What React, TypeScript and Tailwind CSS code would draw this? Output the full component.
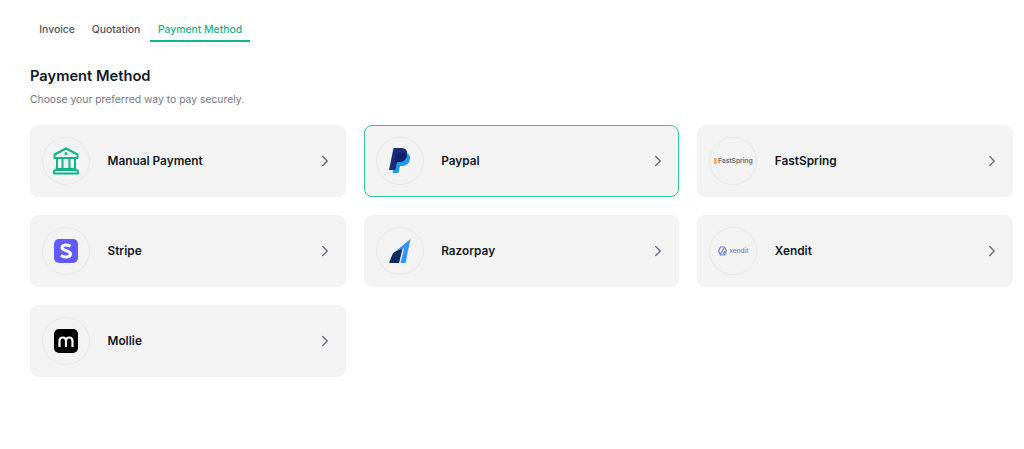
import { ChevronRight } from "lucide-react";
import type { ReactNode } from "react";

function BankIcon() {
  return (
    <svg width="28" height="28" viewBox="0 0 28 28" fill="none" stroke="#12b488" strokeWidth="2" strokeLinejoin="round" strokeLinecap="round">
      <path d="M14 1.5 L25.5 7.5 V11 H2.5 V7.5 Z" />
      <path d="M5 11 V22 M10.5 11 V22 M17.5 11 V22 M23 11 V22" />
      <path d="M4.5 22 H23.5 M2 26.5 V25 Q2 23 4 23 H24 Q26 23 26 25 V26.5 Z" />
      <circle cx="14" cy="6.7" r="0.6" fill="#12b488" />
    </svg>
  );
}

function PaypalIcon() {
  return (
    <svg width="22" height="26" viewBox="0 0 22 26">
      <path d="M7 5 H15 Q22 5 21 11 Q20 18 13 18 H11 L9.4 25 H3.6 Z" fill="#1d9bea" />
      <path d="M4.5 0 H12.5 Q19 0 18 6.5 Q17 14 10 14 H8 L6.4 22 H0 Z" fill="#1a2f7a" />
      <path d="M6.8 5.2 H15 Q18 5.6 18 7 Q17 14 10 14 H8 L6.4 18 Z" fill="#14206a" />
    </svg>
  );
}

function StripeIcon() {
  return (
    <div className="flex h-6 w-6 items-center justify-center rounded-[5px] bg-[#635bff]">
      <svg width="14" height="16" viewBox="0 0 14 16" fill="none" stroke="#ffffff" strokeWidth="3">
        <path d="M11.5 3.2 Q9 1.8 6.5 2 Q3 2.3 3 4.6 Q3 6.6 7 7.6 Q11.5 8.8 11.5 11 Q11.5 13.8 7.5 14 Q4.5 14.2 2 12.6" />
      </svg>
    </div>
  );
}

function RazorpayIcon() {
  return (
    <svg width="22" height="24" viewBox="0 0 22 24">
      <path d="M0 24 L4 14 L14 8 L10 24 Z" fill="#0b2a5e" />
      <path d="M7 12 L21.5 0 L16.5 24 H11.5 L15 9.5 Z" fill="#3395ff" />
    </svg>
  );
}

function FastSpringLogo() {
  return (
    <div className="flex items-center gap-px">
      <div className="h-[6px] w-[3px] bg-[#f8b27c]" />
      <span className="text-[6.8px] leading-none font-semibold tracking-[-0.1px] text-[#6a6a6a]">FastSpring</span>
    </div>
  );
}

function XenditLogo() {
  return (
    <div className="flex items-center gap-[2px]">
      <svg width="9" height="10" viewBox="0 0 9 10" fill="none" stroke="#6f82cf" strokeWidth="1.2">
        <path d="M2.5 1 H6.5 L8.4 5 L6.5 9 H2.5 L0.6 5 Z M6 2 L2.5 8 M7 5 L5 8" />
      </svg>
      <span className="text-[6.5px] leading-none font-medium text-[#6f82cf]">xendit</span>
    </div>
  );
}

function MollieIcon() {
  return (
    <div className="flex h-6 w-6 items-center justify-center rounded-[5px] bg-black">
      <svg width="16" height="11" viewBox="0 0 16 11" fill="none" stroke="#ffffff" strokeWidth="2.2">
        <path d="M1.5 11 V5 Q1.5 1.5 4.8 1.5 Q8 1.5 8 5 V11 M8 5 Q8 1.5 11.2 1.5 Q14.5 1.5 14.5 5 V11" />
      </svg>
    </div>
  );
}

const methods: { name: string; icon: ReactNode; active?: boolean }[] = [
  { name: "Manual Payment", icon: <BankIcon /> },
  { name: "Paypal", icon: <PaypalIcon />, active: true },
  { name: "FastSpring", icon: <FastSpringLogo /> },
  { name: "Stripe", icon: <StripeIcon /> },
  { name: "Razorpay", icon: <RazorpayIcon /> },
  { name: "Xendit", icon: <XenditLogo /> },
  { name: "Mollie", icon: <MollieIcon /> },
];

export default function App() {
  return (
    <div className="min-h-[449px] bg-white pt-[18px] pr-[11px] pl-[30px] font-['Inter',sans-serif]">
      {/* Tabs */}
      <div className="ml-px flex text-[10.4px] font-medium">
        <div className="px-[8.25px] py-[4px] leading-[16px] text-[#4b5563]">Invoice</div>
        <div className="mr-[0.75px] px-[8.5px] py-[4px] leading-[16px] text-[#4b5563]">Quotation</div>
        <div className="border-b-2 border-[#14b48a] px-[8.25px] pt-[4px] pb-[2px] leading-[16px] text-[#14b48a]">Payment Method</div>
      </div>

      <h1 className="mt-[23px] text-[14.7px] leading-[22px] font-semibold text-[#111827]">Payment Method</h1>
      <p className="mt-[4px] text-[10.35px] leading-[16px] text-[#737a87]">Choose your preferred way to pay securely.</p>

      <div className="mt-[18px] grid grid-cols-3 gap-[18px]">
        {methods.map((m) => (
          <div
            key={m.name}
            className={
              m.active
                ? "flex h-[72px] items-center rounded-lg border border-[#2fc9a0] bg-[#f3f3f3] pr-[11px] pl-[11px]"
                : "flex h-[72px] items-center rounded-lg border border-[#f3f3f3] bg-[#f3f3f3] pr-[11px] pl-[11px]"
            }
          >
            <div className="flex h-[48px] w-[48px] shrink-0 items-center justify-center rounded-full border border-[#e7e7e7]">
              {m.icon}
            </div>
            <span className="ml-[17.5px] flex-1 pt-[2px] text-[11.84px] font-semibold text-[#111827]">{m.name}</span>
            <ChevronRight size={18} strokeWidth={2} className="text-[#6b7280]" />
          </div>
        ))}
      </div>
    </div>
  );
}
